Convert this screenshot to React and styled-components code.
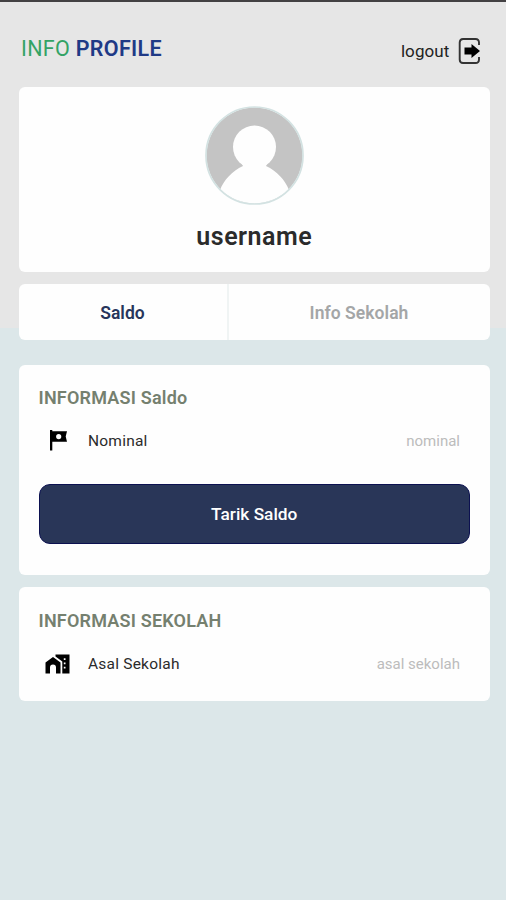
import React from 'react'
import styled, {createGlobalStyle} from 'styled-components'

const GlobalStyle = createGlobalStyle`
  body {
    margin: 0;
    background: #dce7e9;
    font-family: Roboto, "Liberation Sans", sans-serif;
  }
  `

const S = {
  View: styled.div`
  box-sizing: border-box;
  display: flex;
  flex-direction: column;
  height: 900px;
  padding: 0 16px 0 18.5px;
  border-top: solid 2px #434143;
  background: linear-gradient(#e6e6e6 326px, #dce7e9 326px);
  `,

  Header: styled.header`
  display: flex;
  justify-content: space-between;
  height: 85px;
  padding: 0 8.5px 0 2.5px;
  `,

  Title: styled.h1`
  margin: 33px 0 0;
  font-size: 21.5px;
  line-height: 27px;
  font-weight: 400;
  letter-spacing: 0.3px;
  color: #34a365;
  `,

  TitleBold: styled.span`
  font-weight: 600;
  color: #1f3a86;
  `,

  Logout: styled.button`
  display: flex;
  align-items: center;
  gap: 8px;
  height: 28px;
  margin-top: 35px;
  padding: 0;
  border: none;
  background: none;
  font: 400 17px Roboto, sans-serif;
  letter-spacing: 0.1px;
  color: #222;
  `,

  Card: styled.section`
  box-sizing: border-box;
  height: ${({$height}) => $height}px;
  margin-bottom: 12px;
  padding: 20px 20px 0;
  border-radius: 6px;
  background: #fefefe;
  `,

  Profile: styled.div`
  display: flex;
  flex-direction: column;
  align-items: center;
  margin-top: -1px;
  `,

  Username: styled.h2`
  margin: 16px 0 0;
  font-size: 25px;
  line-height: 32px;
  font-weight: 600;
  letter-spacing: 0.5px;
  color: #2b2b2b;
  `,

  Tabs: styled.nav`
  display: flex;
  height: 56px;
  margin-bottom: 25px;
  border-radius: 6px;
  background: #fefefe;
  `,

  Tab: styled.button`
  box-sizing: border-box;
  width: ${({$width}) => $width};
  padding: 2px 0 0;
  border: none;
  border-right: ${({$active}) => ($active ? 'solid 2px #f0f4f4' : 'none')};
  background: none;
  font: 600 17.5px Roboto, sans-serif;
  letter-spacing: 0.05px;
  color: ${({$active}) => ($active ? '#27355b' : '#a4a6a7')};
  `,

  Heading: styled.h3`
  margin: 0;
  font-size: 18px;
  line-height: ${({$tall}) => ($tall ? 27 : 26)}px;
  font-weight: 600;
  letter-spacing: 0.2px;
  color: #75806f;
  `,

  Row: styled.div`
  display: flex;
  align-items: center;
  height: 26px;
  margin-top: 16.5px;
  padding: 0 10px 0 6px;
  `,

  IconBox: styled.span`
  display: flex;
  width: 43.5px;
  color: #000;
  `,

  Label: styled.span`
  flex: 1;
  font-size: 15.5px;
  letter-spacing: 0.22px;
  color: #2b2b2b;
  `,

  Value: styled.span`
  font-size: 15px;
  color: #bcbcbc;
  `,

  Button: styled.button`
  width: 100%;
  height: 59.5px;
  margin-top: 30.5px;
  border: solid 1.5px #0c1150;
  border-radius: 11px;
  background: #293658;
  font: 500 17.3px Roboto, sans-serif;
  color: #fff;
  `,
}

const LogoutIcon = () => (
  <svg width="24" height="28" viewBox="0 0 24 28" fill="none">
    <path d="M21 8V5.5Q21 2 17.5 2H5Q1.700 2 1.700 5.500V22.500Q1.700 26 5 26H17.500Q21 26 21 22.500V20" stroke="#333" strokeWidth="1.900" />
    <path d="M6.500 10.500H13.500V7L22 14L13.500 21V17.500H6.500Z" fill="#000" />
  </svg>
)

const FlagIcon = () => (
  <svg width="26" height="26" viewBox="0 0 26 26" fill="currentColor">
    <path fillRule="evenodd" d="M5 2H7.300V3.300H22L20.700 8.500L22 13.700H7.300V22.500H5ZM13.700 6A2.600 2.600 0 1 0 13.700 11.200A2.600 2.600 0 1 0 13.700 6Z" />
  </svg>
)

const SchoolIcon = () => (
  <svg width="26" height="26" viewBox="0 0 26 26" fill="currentColor">
    <path d="M.5 22.500V11.500L8 6L15.500 11.500V22.500H11V16.500Q11 13.500 8 13.500T5 16.500V22.500Z" />
    <path fillRule="evenodd" d="M10.500 3.500H24.500V22.500H17.300V10.500L10.500 5.500ZM18.800 7.200V9H20.500V7.200ZM18.800 11.500V13.300H20.500V11.500ZM18.800 15.800V17.600H20.500V15.800Z" />
  </svg>
)

const Avatar = () => (
  <svg width="99" height="99" viewBox="0 0 99 99">
    <clipPath id="face">
      <circle cx="49.500" cy="49.500" r="48" />
    </clipPath>
    <g clipPath="url(#face)">
      <rect width="99" height="99" fill="#c4c4c4" />
      <circle cx="49.500" cy="41" r="21.500" fill="#fefefe" />
      <path d="M36 56L38 60C27 65 19 74 15 84V99H84V84C80 74 72 65 61 60L63 56Z" fill="#fefefe" />
    </g>
    <circle cx="49.500" cy="49.500" r="48.500" fill="none" stroke="#d3e2e2" strokeWidth="1.700" />
  </svg>
)

function InfoRow({icon, label, value}) {
  return (
    <S.Row>
      <S.IconBox>{icon}</S.IconBox>
      <S.Label>{label}</S.Label>
      <S.Value>{value}</S.Value>
    </S.Row>
  )
}

function App() {
  return (
    <S.View>
      <GlobalStyle />
      <S.Header>
        <S.Title>INFO <S.TitleBold>PROFILE</S.TitleBold></S.Title>
        <S.Logout>logout <LogoutIcon /></S.Logout>
      </S.Header>
      <S.Card $height={185}>
        <S.Profile>
          <Avatar />
          <S.Username>username</S.Username>
        </S.Profile>
      </S.Card>
      <S.Tabs>
        <S.Tab $width='210px' $active>Saldo</S.Tab>
        <S.Tab $width='261px'>Info Sekolah</S.Tab>
      </S.Tabs>
      <S.Card $height={210}>
        <S.Heading>INFORMASI Saldo</S.Heading>
        <InfoRow icon={<FlagIcon />} label='Nominal' value='nominal' />
        <S.Button>Tarik Saldo</S.Button>
      </S.Card>
      <S.Card $height={114}>
        <S.Heading $tall>INFORMASI SEKOLAH</S.Heading>
        <InfoRow icon={<SchoolIcon />} label='Asal Sekolah' value='asal sekolah' />
      </S.Card>
    </S.View>
  )
}

export default App
